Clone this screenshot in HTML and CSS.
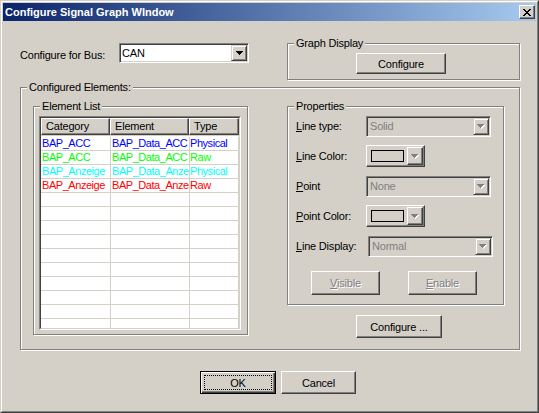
FILE: index.html
```html
<!DOCTYPE html>
<html>
<head>
<meta charset="utf-8">
<title>Configure Signal Graph WIndow</title>
<link rel="stylesheet" href="styles.css">
</head>
<body>
<div class="window">
  <div class="frame">
    <div class="titlebar">
      <span class="title">Configure Signal Graph WIndow</span>
      <span class="close">
        <svg width="8" height="7" viewBox="0 0 8 7" shape-rendering="crispEdges"><path d="M0 0h2v1h-2zM6 0h2v1h-2zM1 1h2v1h-2zM5 1h2v1h-2zM2 2h4v1h-4zM3 3h2v1h-2zM2 4h4v1h-4zM1 5h2v1h-2zM5 5h2v1h-2zM0 6h2v1h-2zM6 6h2v1h-2z" fill="#000"/></svg>
      </span>
    </div>
    <div class="content">
      <div class="row-top">
        <div class="bus">
          <span class="bus-label">Configure for Bus:</span>
          <div class="combo combo-bus">
            <span class="combo-text">CAN</span>
            <span class="combo-btn"><svg width="7" height="4" viewBox="0 0 7 4" shape-rendering="crispEdges"><path d="M0 0h7v1h-7zM1 1h5v1h-5zM2 2h3v1h-3zM3 3h1v1h-1z" fill="#000"/></svg></span>
          </div>
        </div>
        <div class="group graph">
          <span class="legend">Graph Display</span>
          <button class="btn btn-graph">Configure</button>
        </div>
      </div>

      <div class="group configured">
        <span class="legend">Configured Elements:</span>
        <div class="configured-inner">
          <div class="group elist">
            <span class="legend">Element List</span>
            <div class="listview">
              <div class="lv-inner">
                <div class="lv-header">
                  <span class="hcell hc-cat">Category</span>
                  <span class="hcell hc-el">Element</span>
                  <span class="hcell hc-type">Type</span>
                </div>
                <div class="lv-body">
                  <div class="lv-row c-blue"><span class="cell c-cat">BAP_ACC</span><span class="cell c-el">BAP_Data_ACC</span><span class="cell c-type">Physical</span></div>
                  <div class="lv-row c-green"><span class="cell c-cat">BAP_ACC</span><span class="cell c-el">BAP_Data_ACC</span><span class="cell c-type">Raw</span></div>
                  <div class="lv-row c-cyan"><span class="cell c-cat">BAP_Anzeige</span><span class="cell c-el">BAP_Data_Anzeige</span><span class="cell c-type">Physical</span></div>
                  <div class="lv-row c-red"><span class="cell c-cat">BAP_Anzeige</span><span class="cell c-el">BAP_Data_Anzeige</span><span class="cell c-type">Raw</span></div>
                  <div class="lv-row"><span class="cell c-cat"></span><span class="cell c-el"></span><span class="cell c-type"></span></div>
                  <div class="lv-row"><span class="cell c-cat"></span><span class="cell c-el"></span><span class="cell c-type"></span></div>
                  <div class="lv-row"><span class="cell c-cat"></span><span class="cell c-el"></span><span class="cell c-type"></span></div>
                  <div class="lv-row"><span class="cell c-cat"></span><span class="cell c-el"></span><span class="cell c-type"></span></div>
                  <div class="lv-row"><span class="cell c-cat"></span><span class="cell c-el"></span><span class="cell c-type"></span></div>
                  <div class="lv-row"><span class="cell c-cat"></span><span class="cell c-el"></span><span class="cell c-type"></span></div>
                  <div class="lv-row"><span class="cell c-cat"></span><span class="cell c-el"></span><span class="cell c-type"></span></div>
                  <div class="lv-row"><span class="cell c-cat"></span><span class="cell c-el"></span><span class="cell c-type"></span></div>
                  <div class="lv-row"><span class="cell c-cat"></span><span class="cell c-el"></span><span class="cell c-type"></span></div>
                  <div class="lv-row"><span class="cell c-cat"></span><span class="cell c-el"></span><span class="cell c-type"></span></div>
                </div>
              </div>
            </div>
          </div>

          <div class="right-col">
            <div class="group props">
              <span class="legend">Properties</span>
              <div class="props-grid">
                <span class="plabel"><u>L</u>ine type:</span>
                <div class="combo combo-dis">
                  <span class="combo-text">Solid</span>
                  <span class="combo-btn"><svg width="8" height="5" viewBox="0 0 8 5" shape-rendering="crispEdges"><path d="M1 1h7v1h-7zM2 2h5v1h-5zM3 3h3v1h-3zM4 4h1v1h-1z" fill="#fff"/><path d="M0 0h7v1h-7zM1 1h5v1h-5zM2 2h3v1h-3zM3 3h1v1h-1z" fill="#808080"/></svg></span>
                </div>

                <span class="plabel"><u>L</u>ine Color:</span>
                <div class="colorbtn">
                  <span class="swatch"></span>
                  <span class="cb-arrow"><svg width="8" height="5" viewBox="0 0 8 5" shape-rendering="crispEdges"><path d="M1 1h7v1h-7zM2 2h5v1h-5zM3 3h3v1h-3zM4 4h1v1h-1z" fill="#fff"/><path d="M0 0h7v1h-7zM1 1h5v1h-5zM2 2h3v1h-3zM3 3h1v1h-1z" fill="#808080"/></svg></span>
                </div>

                <span class="plabel"><u>P</u>oint</span>
                <div class="combo combo-dis">
                  <span class="combo-text">None</span>
                  <span class="combo-btn"><svg width="8" height="5" viewBox="0 0 8 5" shape-rendering="crispEdges"><path d="M1 1h7v1h-7zM2 2h5v1h-5zM3 3h3v1h-3zM4 4h1v1h-1z" fill="#fff"/><path d="M0 0h7v1h-7zM1 1h5v1h-5zM2 2h3v1h-3zM3 3h1v1h-1z" fill="#808080"/></svg></span>
                </div>

                <span class="plabel"><u>P</u>oint Color:</span>
                <div class="colorbtn">
                  <span class="swatch"></span>
                  <span class="cb-arrow"><svg width="8" height="5" viewBox="0 0 8 5" shape-rendering="crispEdges"><path d="M1 1h7v1h-7zM2 2h5v1h-5zM3 3h3v1h-3zM4 4h1v1h-1z" fill="#fff"/><path d="M0 0h7v1h-7zM1 1h5v1h-5zM2 2h3v1h-3zM3 3h1v1h-1z" fill="#808080"/></svg></span>
                </div>

                <span class="plabel"><u>L</u>ine Display:</span>
                <div class="combo combo-dis combo-shift">
                  <span class="combo-text">Normal</span>
                  <span class="combo-btn"><svg width="8" height="5" viewBox="0 0 8 5" shape-rendering="crispEdges"><path d="M1 1h7v1h-7zM2 2h5v1h-5zM3 3h3v1h-3zM4 4h1v1h-1z" fill="#fff"/><path d="M0 0h7v1h-7zM1 1h5v1h-5zM2 2h3v1h-3zM3 3h1v1h-1z" fill="#808080"/></svg></span>
                </div>
              </div>
              <div class="prop-buttons">
                <button class="btn btn-dis"><span><u>V</u>isible</span></button>
                <button class="btn btn-dis"><span><u>E</u>nable</span></button>
              </div>
            </div>
            <button class="btn btn-conf">Configure ...</button>
          </div>
        </div>
      </div>

      <div class="actions">
        <button class="btn btn-ok"><span class="focus">OK</span></button>
        <button class="btn btn-cancel">Cancel</button>
      </div>
    </div>
  </div>
</div>
</body>
</html>
```
FILE: styles.css
```css
* { box-sizing: border-box; margin: 0; padding: 0; }
html, body { margin: 0; background: #d4d0c8; }
body { font: 11px "Liberation Sans", Arial, sans-serif; color: #000; letter-spacing: -0.2px; }
u { text-decoration: underline; text-underline-offset: 1px; }

.window {
  width: 539px; height: 413px;
  border: 1px solid; border-color: #d4d0c8 #404040 #404040 #d4d0c8;
  background: #d4d0c8;
}
.frame {
  height: 100%;
  border: 1px solid; border-color: #fff #808080 #808080 #fff;
  padding: 1px;
}
.titlebar {
  height: 18px;
  background: linear-gradient(to right, #0a246a, #a6caf0);
  display: flex; align-items: center;
  padding: 0 1px 0 2px;
}
.title { flex: 1; color: #fff; font-weight: bold; font-size: 11px; white-space: nowrap; letter-spacing: 0; }
.close {
  width: 16px; height: 14px;
  display: flex; align-items: center; justify-content: center;
  background: #d4d0c8;
  border: 1px solid; border-color: #fff #404040 #404040 #fff;
  box-shadow: inset -1px -1px #808080;
}

.content { padding: 22px 0 0 17px; }

/* buttons */
.btn {
  font: inherit; letter-spacing: inherit; color: #000; background: #d4d0c8;
  border: 1px solid; border-color: #fff #404040 #404040 #fff;
  box-shadow: inset -1px -1px #808080;
  display: flex; align-items: center; justify-content: center;
  padding: 0; white-space: nowrap;
}
.btn-dis { color: #808080; text-shadow: 1px 1px 0 #fff; }

/* groups */
.group {
  border: 1px solid #808080;
  box-shadow: inset 1px 1px 0 #fff, 1px 1px 0 #fff;
}
.legend {
  display: block; width: max-content;
  margin: -7px 0 0 6px; padding: 0 2px;
  height: 13px; line-height: 13px;
  background: #d4d0c8; white-space: nowrap;
}

/* combo */
.combo {
  display: flex;
  border: 1px solid; border-color: #808080 #fff #fff #808080;
  box-shadow: inset 1px 1px #404040, inset -1px -1px #d4d0c8;
  padding: 1px;
}
.combo-text { flex: 1; padding-left: 2px; line-height: 16px; white-space: nowrap; overflow: hidden; }
.combo-btn {
  width: 16px; flex: none;
  display: flex; align-items: center; justify-content: center;
  background: #d4d0c8;
  border: 1px solid; border-color: #d4d0c8 #404040 #404040 #d4d0c8;
  box-shadow: inset 1px 1px #fff, inset -1px -1px #808080;
}
.combo-bus { width: 130px; height: 20px; background: #fff; }
.combo-bus .combo-text { line-height: 16px; padding-left: 1px; }
.combo-dis { width: 125px; height: 21px; background: #d4d0c8; color: #808080; }
.combo-dis .combo-text { line-height: 17px; }
.combo-shift { margin-left: 2px; }

/* top row */
.row-top { display: flex; align-items: flex-start; height: 37px; }
.bus { display: flex; align-items: flex-start; }
.bus-label { width: 99px; padding-top: 6px; line-height: 13px; }
.graph { width: 233px; height: 37px; margin-left: 38px; }
.btn-graph { width: 90px; height: 21px; margin: 3px 0 0 68px; }

/* configured */
.configured { width: 500px; height: 263px; margin-top: 7px; }
.configured-inner { display: flex; align-items: flex-start; margin: 12px 0 0 12px; }
.elist { width: 215px; height: 229px; }
.right-col { margin-left: 39px; display: flex; flex-direction: column; }
.props { width: 217px; height: 199px; }
.btn-conf { width: 86px; height: 23px; margin: 10px 0 0 69px; }

/* listview */
.listview {
  width: 202px; height: 214px; margin: 3px 0 0 5px;
  border: 1px solid; border-color: #808080 #fff #fff #808080;
  background: #fff;
}
.lv-inner {
  height: 100%;
  border: 1px solid; border-color: #404040 #d4d0c8 #d4d0c8 #404040;
  overflow: hidden;
}
.lv-header { display: flex; height: 17px; }
.hcell {
  height: 17px; line-height: 15px; padding-left: 4px;
  background: #d4d0c8;
  border: 1px solid; border-color: #fff #404040 #404040 #fff;
  box-shadow: inset -1px -1px #808080;
  white-space: nowrap; overflow: hidden;
}
.hc-cat { width: 69px; }
.hc-el { width: 79px; }
.hc-type { width: 50px; }
.lv-body { border-top: 1px solid #d4d0c8; padding-top: 1px; }
.lv-row { display: flex; height: 14px; border-bottom: 1px solid #d4d0c8; }
.cell {
  height: 13px; line-height: 13px;
  border-right: 1px solid #d4d0c8;
  white-space: nowrap; overflow: hidden;
  letter-spacing: -0.45px;
}
.c-cat { width: 70px; padding-left: 1px; }
.c-el { width: 79px; padding-left: 1px; }
.c-type { width: 49px; }
.c-blue { color: #0000ff; }
.c-green { color: #00ff00; }
.c-cyan { color: #00ffff; }
.c-red { color: #ff0000; }

/* properties */
.props-grid {
  display: grid;
  grid-template-columns: 70px 127px;
  grid-auto-rows: 30px;
  align-items: center;
  margin: -2px 0 0 8px;
}
.plabel { white-space: nowrap; }
.colorbtn {
  width: 59px; height: 22px;
  display: flex; align-items: center;
  padding: 0 1px 0 4px;
  background: #d4d0c8;
  border: 1px solid; border-color: #fff #404040 #404040 #fff;
  box-shadow: inset -1px -1px #808080;
}
.swatch { width: 33px; height: 12px; border: 1px solid #000; background: #d4d0c8; }
.cb-arrow {
  width: 16px; height: 18px; margin-left: auto;
  display: flex; align-items: center; justify-content: center;
  border: 1px solid; border-color: #fff #404040 #404040 #fff;
  box-shadow: inset -1px -1px #808080;
}
.prop-buttons { display: flex; gap: 28px; margin: 10px 0 0 23px; }
.prop-buttons .btn { width: 69px; height: 24px; }

/* actions */
.actions { display: flex; gap: 5px; margin: 21px 0 0 180px; }
.btn-ok {
  width: 76px; height: 23px; padding: 3px;
  border: 1px solid #000;
  box-shadow: inset 1px 1px #fff, inset -1px -1px #404040, inset -2px -2px #808080;
}
.focus {
  flex: 1; align-self: stretch;
  display: flex; align-items: center; justify-content: center;
  border: 1px dotted #000;
}
.btn-cancel { width: 75px; height: 23px; }
```
